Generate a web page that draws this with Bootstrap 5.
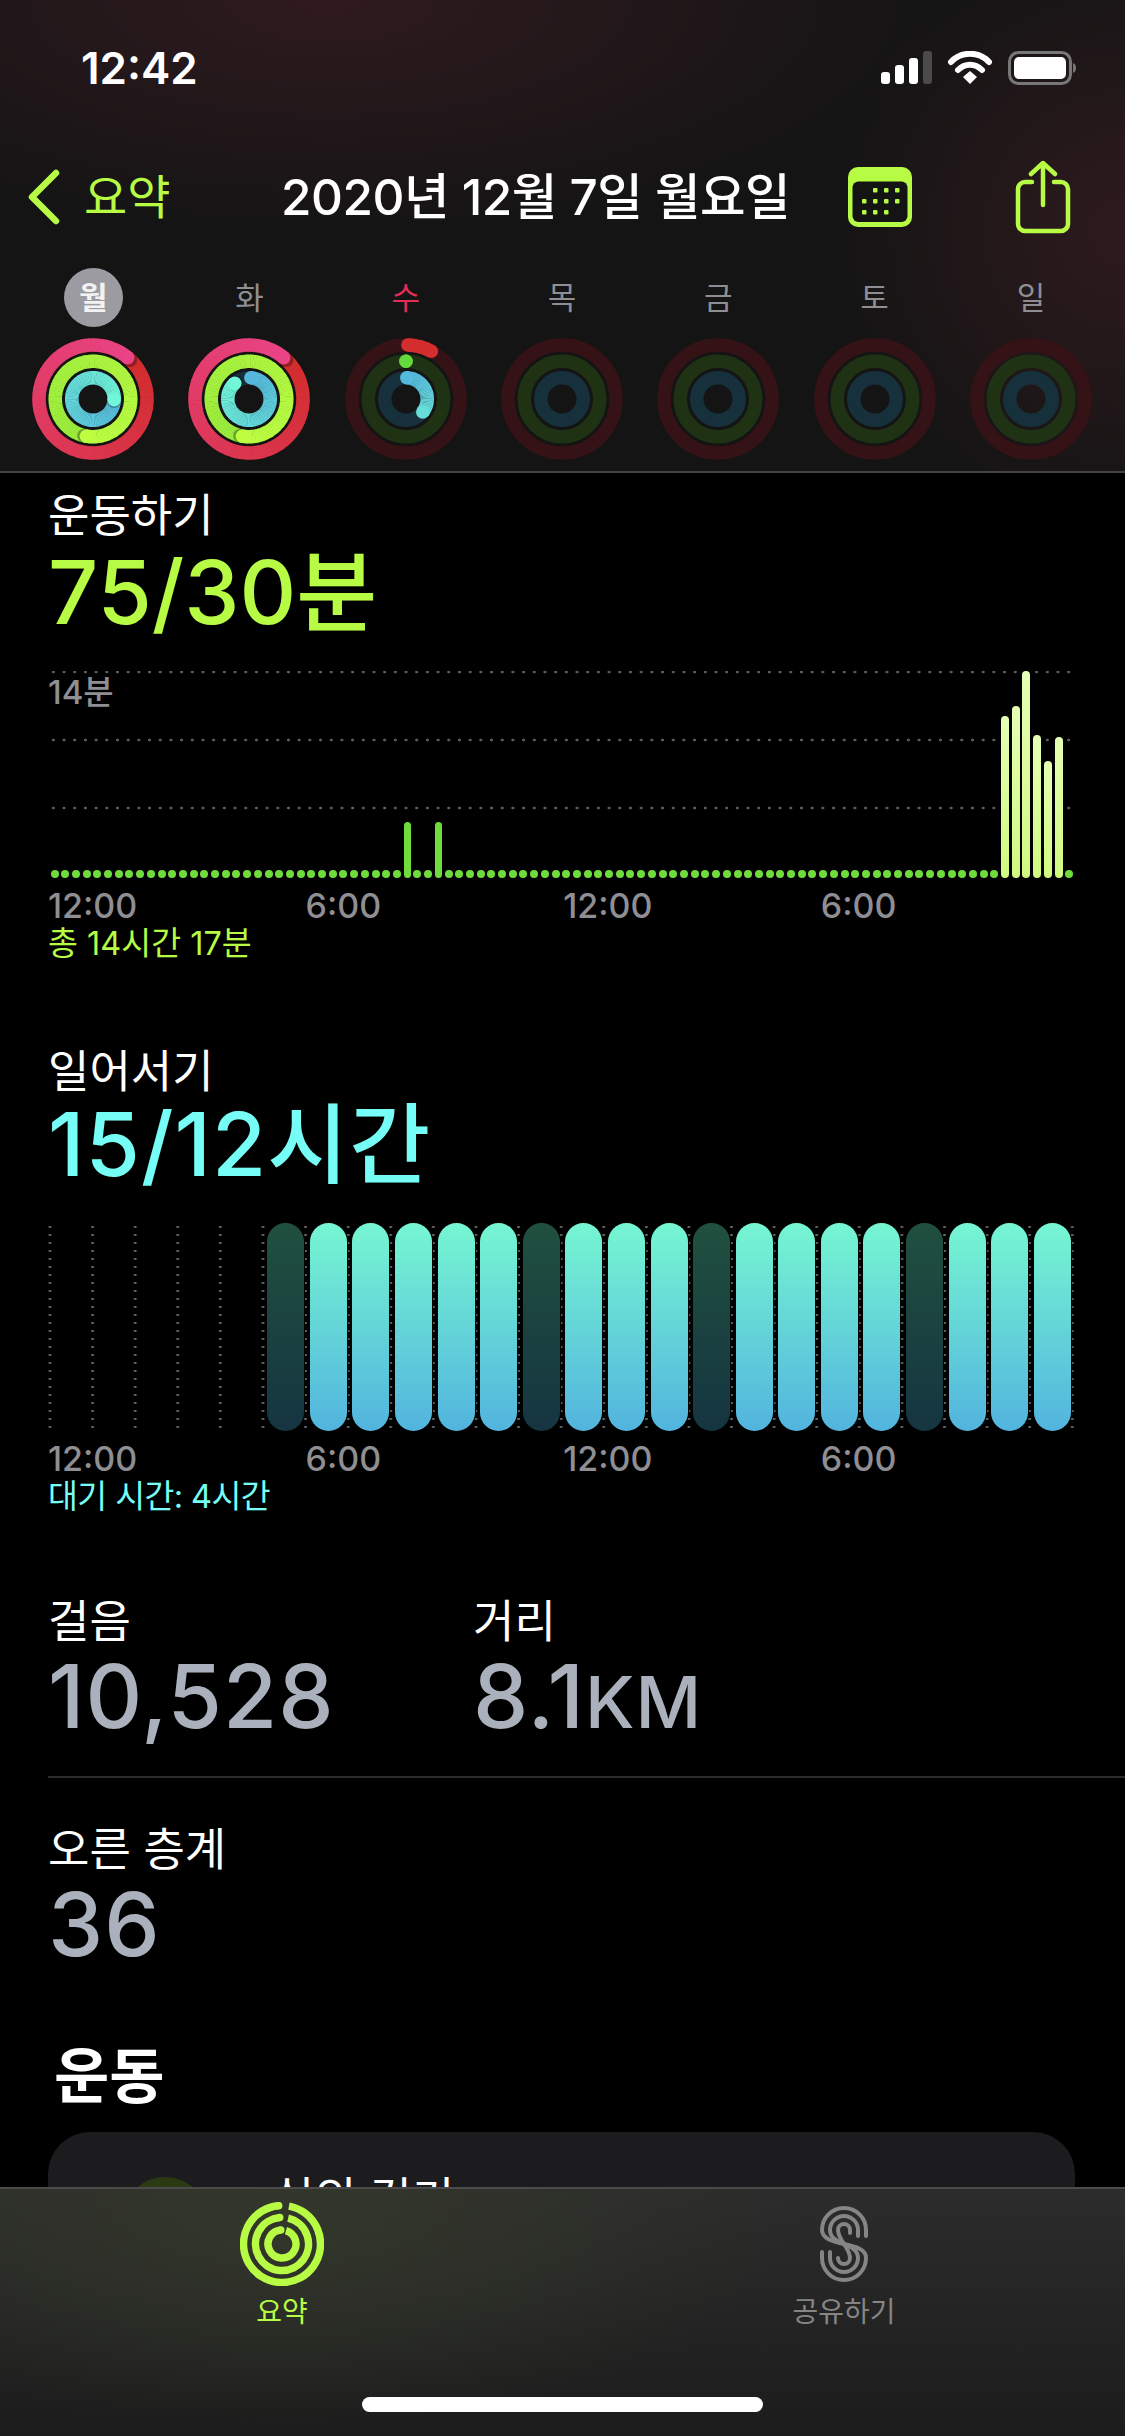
<!DOCTYPE html>
<html lang="ko">
<head>
  <meta charset="UTF-8">
  <meta name="viewport" content="width=device-width, initial-scale=1">
  <title>활동 요약</title>
  <link href="https://cdn.jsdelivr.net/npm/bootstrap@5.3.0/dist/css/bootstrap.min.css" rel="stylesheet">
  <style>
    body { background: #000; color: #fff; font-family: Inter, "Noto Sans CJK KR", sans-serif; }
    .phone { width: 1125px; height: 2436px; }

    /* header */
    .top-area { height: 473px; border-bottom: 2px solid #444446; background: radial-gradient(620px 240px at 330px 0, #2f1a1f, transparent), radial-gradient(300px 300px at 1125px 230px, #2e1a1e, transparent), #141414; }
    .status-row { height: 136px; padding: 0 44px 0 81px; }
    .clock { font-size: 44px; font-weight: 600; }
    .nav-row { height: 122px; padding: 0 54px 0 28px; }
    .back-link { width: 240px; gap: 24px; color: #b7fb45; font-size: 47px; }
    .date-title { margin: 0 auto 0 13px; font-size: 49.5px; font-weight: 500; letter-spacing: -.5px; white-space: nowrap; }
    .nav-icons { gap: 103px; }
    .week-row { padding: 10px 0 0 15px; }
    .week-cell { width: 156.3px; }
    .day-name { height: 59px; font-size: 31px; color: #8e8e93; }
    .day-name.today { color: #e22e58; }
    .day-name span { width: 59px; height: 59px; line-height: 59px; }
    .day-name.picked span { background: #9c9ba2; color: #f2f2f2; font-weight: 600; }
    .ring-box { margin-top: 11px; height: 122px; }

    /* scrolling content */
    .scroll-area { padding-left: 48px; flex: 1 1 0; min-height: 0; }
    .stat-label { height: 60px; line-height: 60px; font-size: 45px; }
    .stat-big { height: 88px; line-height: 88px; font-size: 88px; font-weight: 500; letter-spacing: 1px; white-space: nowrap; }
    .unit-small { font-size: 72px; }
    .lime-text { color: #b7fb45; }
    .aqua-text { color: #76fdf5; }
    .silver-text { color: #aab0bc; }
    .first-label { margin-top: 13px; }
    .first-big { margin-top: 2px; letter-spacing: 0; }
    .move-chart { margin-top: 35px; width: 1027px; height: 207px; padding: 0 1px 0 2.500px; background-image: radial-gradient(circle, #5c5c5c 1.2px, transparent 1.7px), radial-gradient(circle, #5c5c5c 1.2px, transparent 1.7px), radial-gradient(circle, #5c5c5c 1.2px, transparent 1.7px); background-size: 10.69px 4px; background-repeat: repeat-x; background-position: 0 -1px, 0 67px, 0 135px; }
    .chart-note { position: absolute; left: 0; top: 1px; font-size: 33px; font-weight: 500; color: #8e8e93; line-height: 40px; }
    .min-col { width: 8px; }
    .min-col.dot { background: #6fdc3c; }
    .min-col.low { width: 7px; background: #6fdc3c; }
    .min-col.high { background: linear-gradient(#e6ffb5, #d0fa80); box-shadow: 0 0 0 2px #000; }
    .time-row { height: 40px; line-height: 40px; margin-top: 8px; font-size: 34px; font-weight: 500; color: #8e8e93; }
    .time-row span { width: 257.6px; }
    .sum-line { height: 36px; line-height: 36px; font-size: 32.500px; }
    .sum-line.aqua-text { letter-spacing: -.6px; }
    .stand-label { margin-top: 80px; }
    .stand-big { margin-top: -2px; }
    .stand-chart { margin-top: 35px; width: 1027px; height: 208px; padding-left: 3.200px; background-image: radial-gradient(circle, #666 1px, transparent 1.5px); background-size: 42.6px 8px; background-position: -19.3px 0; }
    .hour-col { width: 42.6px; flex: none; }
    .hour-bar { width: 37px; height: 100%; margin-left: 3px; background: linear-gradient(#76f6d2, #52b4de); box-shadow: 0 0 0 1px #000; }
    .hour-bar.idle { background: linear-gradient(#20503f, #153541); }
    .steps-label { margin-top: 77px; }
    .steps-col { width: 425px; }
    .split-line { margin-top: 36px; border-top: 2px solid #2c2c2e; }
    .floors-label { margin-top: 42px; }
    .section-title { margin-top: 74px; padding-left: 6px; height: 68px; line-height: 68px; font-size: 60px; font-weight: 700; }
    .workout-box { margin-top: 22px; width: 1027px; height: 200px; padding: 45px 0 0 74px; gap: 64px; background: #1c1c1f; border-radius: 42px 42px 0 0; }
    .workout-dot { width: 86px; height: 86px; background: #2c3a14; }
    .workout-name { margin-top: -9px; font-size: 46px; line-height: 60px; }

    /* tab bar */
    .tab-area { height: 249px; border-top: 2px solid #4b4b4d; background: radial-gradient(520px 220px at 280px 20px, #33372a, transparent), linear-gradient(#2c2c2c, #1b1c1b); }
    .tab-row { padding: 13px 0 0 182px; gap: 362px; }
    .tab-item { width: 200px; }
    .tab-icon { height: 84px; }
    .tab-text { margin-top: 8px; height: 36px; line-height: 36px; font-size: 28px; }
    .tab-text.off { color: #858585; }
    .home-bar { width: 401px; height: 15px; margin-top: 67px; background: #fff; }
  </style>
</head>
<body>
  <div class="phone d-flex flex-column overflow-hidden">
    <!-- 상단 영역 -->
    <header class="top-area flex-shrink-0">
      <div class="status-row d-flex align-items-center justify-content-between">
        <div class="clock">12:42</div>
        <svg width="200" height="34" viewBox="0 0 200 34">
          <rect x="0" y="21" width="9" height="12" rx="3" fill="#fff"/>
          <rect x="14" y="14" width="9" height="19" rx="3" fill="#fff"/>
          <rect x="28" y="7" width="9" height="26" rx="3" fill="#fff"/>
          <rect x="42" y="0" width="9" height="33" rx="3" fill="#4a4a4a"/>
          <path d="M70 11 C80 0 98 0 108 11" fill="none" stroke="#fff" stroke-width="6" stroke-linecap="round"/>
          <path d="M77 19 C84 12 94 12 101 19" fill="none" stroke="#fff" stroke-width="6" stroke-linecap="round"/>
          <path d="M82 26 L89 20 L96 26 L89 33 Z" fill="#fff"/>
          <rect x="128.500" y="1.500" width="61" height="31" rx="9" fill="none" stroke="#777" stroke-width="3"/>
          <rect x="133" y="6" width="52" height="22" rx="5" fill="#fff"/>
          <path d="M192 12 C196 13 196 21 192 22 Z" fill="#777"/>
        </svg>
      </div>
      <nav class="nav-row d-flex align-items-center">
        <div class="back-link d-flex align-items-center">
          <svg width="32" height="56" viewBox="0 0 32 56"><path d="M28 4 L4 28 L28 52" fill="none" stroke="#b7fb45" stroke-width="6.500" stroke-linecap="round" stroke-linejoin="round"/></svg>
          <span>요약</span>
        </div>
        <div class="date-title">2020년 12월 7일 월요일</div>
        <div class="nav-icons d-flex align-items-center">
          <svg width="64" height="60" viewBox="0 0 64 60">
            <rect width="64" height="60" rx="10" fill="#b7fb45"/>
            <rect x="4.500" y="14.500" width="55" height="40.500" rx="6" fill="#141414"/>
            <g fill="#b7fb45">
              <rect x="25" y="21" width="4.500" height="4.500" rx="1"/><rect x="36" y="21" width="4.500" height="4.500" rx="1"/><rect x="47" y="21" width="4.500" height="4.500" rx="1"/>
              <rect x="14" y="32" width="4.500" height="4.500" rx="1"/><rect x="25" y="32" width="4.500" height="4.500" rx="1"/><rect x="36" y="32" width="4.500" height="4.500" rx="1"/><rect x="47" y="32" width="4.500" height="4.500" rx="1"/>
              <rect x="14" y="43" width="4.500" height="4.500" rx="1"/><rect x="25" y="43" width="4.500" height="4.500" rx="1"/><rect x="36" y="43" width="4.500" height="4.500" rx="1"/>
            </g>
          </svg>
          <svg width="56" height="74" viewBox="0 0 56 74">
            <path d="M17 22 H10 A7 7 0 0 0 3 29 V64 A7 7 0 0 0 10 71 H46 A7 7 0 0 0 53 64 V29 A7 7 0 0 0 46 22 H39" fill="none" stroke="#b7fb45" stroke-width="4.500" stroke-linecap="round"/>
            <path d="M28 45 V3 M16 14 L28 3 L40 14" fill="none" stroke="#b7fb45" stroke-width="4.500" stroke-linecap="round" stroke-linejoin="round"/>
          </svg>
        </div>
      </nav>
      <div id="weekRow" class="week-row d-flex"></div>
    </header>

    <!-- 본문 -->
    <main class="scroll-area overflow-hidden">
      <div class="stat-label first-label">운동하기</div>
      <div class="stat-big first-big lime-text">75/30분</div>
      <div id="moveChart" class="move-chart position-relative d-flex justify-content-between align-items-end">
        <div class="chart-note">14분</div>
      </div>
      <div class="time-row d-flex"><span>12:00</span><span>6:00</span><span>12:00</span><span>6:00</span></div>
      <div class="sum-line lime-text">총 14시간 17분</div>

      <div class="stat-label stand-label">일어서기</div>
      <div class="stat-big stand-big aqua-text">15/12시간</div>
      <div id="standChart" class="stand-chart d-flex"></div>
      <div class="time-row d-flex"><span>12:00</span><span>6:00</span><span>12:00</span><span>6:00</span></div>
      <div class="sum-line aqua-text">대기 시간: 4시간</div>

      <div class="d-flex steps-label">
        <div class="steps-col">
          <div class="stat-label">걸음</div>
          <div class="stat-big silver-text">10,528</div>
        </div>
        <div>
          <div class="stat-label">거리</div>
          <div class="stat-big silver-text">8.1<span class="unit-small">KM</span></div>
        </div>
      </div>
      <div class="split-line"></div>
      <div class="stat-label floors-label">오른 층계</div>
      <div class="stat-big silver-text">36</div>

      <div class="section-title">운동</div>
      <div class="workout-box d-flex">
        <div class="workout-dot rounded-circle flex-shrink-0"></div>
        <div class="workout-name">실외 걷기</div>
      </div>
    </main>

    <!-- 하단 탭 -->
    <footer class="tab-area flex-shrink-0">
      <div class="tab-row d-flex">
        <div class="tab-item d-flex flex-column align-items-center">
          <svg id="tabRings" class="tab-icon" width="84" height="84" viewBox="0 0 84 84"></svg>
          <div class="tab-text lime-text">요약</div>
        </div>
        <div class="tab-item d-flex flex-column align-items-center">
          <svg class="tab-icon" width="50" height="84" viewBox="-1 -4 50 84">
            <g fill="none" stroke="#858585" stroke-width="4" stroke-linecap="round">
              <path d="M46 30 V24 A22 22 0 0 0 2 24 C2 42 46 34 46 52 A22 22 0 0 1 2 52 V46"/>
              <path d="M38 30 V24 A14 14 0 0 0 10 24 C10 40 38 36 38 52 A14 14 0 0 1 10 52 V46"/>
              <path d="M30 27 V24 A6 6 0 0 0 18 24 C18 34 30 42 30 52 A6 6 0 0 1 18 52"/>
            </g>
          </svg>
          <div class="tab-text off">공유하기</div>
        </div>
      </div>
      <div class="home-bar rounded-pill mx-auto"></div>
    </footer>
  </div>

  <script>
    function polar(r, deg, c) {
      const a = (deg - 90) * Math.PI / 180;
      return [c + r * Math.cos(a), c + r * Math.sin(a)];
    }

    function arcPath(r, a, b, c) {
      const [x1, y1] = polar(r, a, c);
      const [x2, y2] = polar(r, b, c);
      return `M${x1} ${y1} A${r} ${r} 0 ${b - a > 180 ? 1 : 0} 1 ${x2} ${y2}`;
    }

    function mixColor(c1, c2, t) {
      const parse = h => [1, 3, 5].map(i => parseInt(h.substr(i, 2), 16));
      const p = parse(c1), q = parse(c2);
      return `rgb(${p.map((v, i) => Math.round(v + (q[i] - v) * t)).join(',')})`;
    }

    // 활동 링 하나를 짧은 호로 나눠서 그라데이션처럼 그린다
    function drawRing(r, ring) {
      const w = 13.5, c = 61;
      let out = `<circle cx="${c}" cy="${c}" r="${r}" fill="none" stroke="${ring.base}" stroke-width="${w}"/>`;
      if (!ring.to && ring.to !== 0) return out;
      const [sx, sy] = polar(r, ring.from, c);
      out += `<circle cx="${sx}" cy="${sy}" r="${w / 2}" fill="${ring.c1}"/>`;
      const steps = Math.max(1, Math.ceil((ring.to - ring.from) / 4));
      const seg = (ring.to - ring.from) / steps;
      const parts = [];
      for (let i = 0; i < steps; i++) {
        const a = ring.from + seg * i;
        const col = mixColor(ring.c1, ring.c2, i / steps);
        parts.push(`<path d="${arcPath(r, a, a + seg + .6, c)}" fill="none" stroke="${col}" stroke-width="${w}"/>`);
      }
      out += parts.slice(0, -6).join('');
      if (ring.to - ring.from >= 300) {
        const [px, py] = polar(r, ring.to + 4, c);
        out += `<circle cx="${px}" cy="${py}" r="${w / 2}" fill="#000" opacity=".3"/>`;
      }
      out += parts.slice(-6).join('');
      const [ex, ey] = polar(r, ring.to, c);
      out += `<circle cx="${ex}" cy="${ey}" r="${w / 2}" fill="${ring.c2}"/>`;
      return out;
    }

    const RED = '#351216', GREEN = '#1f3314', BLUE = '#16303c';
    const dayRings = [
      { name: '월', cls: 'picked', rings: [
        { base: RED, from: 40, to: 400, c1: '#d22c2c', c2: '#ea4487' },
        { base: GREEN, from: 190, to: 550, c1: '#98ea3c', c2: '#bdfd42' },
        { base: BLUE, from: 92, to: 452, c1: '#55b8dc', c2: '#72f6d8' } ] },
      { name: '화', cls: '', rings: [
        { base: RED, from: 40, to: 400, c1: '#d22c2c', c2: '#ea4487' },
        { base: GREEN, from: 190, to: 550, c1: '#98ea3c', c2: '#bdfd42' },
        { base: BLUE, from: 5, to: 318, c1: '#55b8dc', c2: '#72f6d8' } ] },
      { name: '수', cls: 'today', rings: [
        { base: RED, from: 2, to: 28, c1: '#d42d2d', c2: '#d42d2d' },
        { base: GREEN, from: 0, to: 0, c1: '#63d93c', c2: '#63d93c' },
        { base: BLUE, from: 2, to: 128, c1: '#55b8dc', c2: '#68dcd8' } ] },
      { name: '목', cls: '', rings: [{ base: RED }, { base: GREEN }, { base: BLUE }] },
      { name: '금', cls: '', rings: [{ base: RED }, { base: GREEN }, { base: BLUE }] },
      { name: '토', cls: '', rings: [{ base: RED }, { base: GREEN }, { base: BLUE }] },
      { name: '일', cls: '', rings: [{ base: RED }, { base: GREEN }, { base: BLUE }] }
    ];

    const radii = [54, 37.75, 21.25];
    document.getElementById('weekRow').innerHTML = dayRings.map(day => `
      <div class="week-cell d-flex flex-column align-items-center">
        <div class="day-name ${day.cls}"><span class="d-block rounded-circle text-center">${day.name}</span></div>
        <svg class="ring-box" width="122" height="122" viewBox="0 0 122 122">${day.rings.map((ring, i) => drawRing(radii[i], ring)).join('')}</svg>
      </div>`).join('');

    // 분 단위 운동 차트 (96칸)
    const highBars = { 89: 162, 90: 172, 91: 207, 92: 143, 93: 117, 94: 141 };
    const lowBars = { 33: 56, 36: 56 };
    const moveChart = document.getElementById('moveChart');
    for (let i = 0; i < 96; i++) {
      const col = document.createElement('div');
      let h = 8, kind = 'dot';
      if (highBars[i]) { h = highBars[i]; kind = 'high'; }
      if (lowBars[i]) { h = lowBars[i]; kind = 'low'; }
      col.className = `min-col ${kind} rounded-pill`;
      col.style.height = h + 'px';
      moveChart.appendChild(col);
    }

    // 시간별 일어서기 차트 (24칸)
    const idleHours = [5, 11, 15, 20];
    const standChart = document.getElementById('standChart');
    for (let i = 0; i < 24; i++) {
      const col = document.createElement('div');
      col.className = 'hour-col';
      if (i >= 5) {
        col.innerHTML = `<div class="hour-bar rounded-pill ${idleHours.includes(i) ? 'idle' : ''}"></div>`;
      }
      standChart.appendChild(col);
    }

    // 탭 아이콘
    document.getElementById('tabRings').innerHTML = [38.5, 26.5, 14].map(r => {
      const [ex, ey] = polar(r, 355, 42);
      return `<path d="${arcPath(r, 20 - r / 4, 355, 42)}" fill="none" stroke="#b7fb45" stroke-width="7.500"/><circle cx="${ex}" cy="${ey}" r="3.750" fill="#b7fb45"/>`;
    }).join('');
  </script>

  <script src="https://cdn.jsdelivr.net/npm/bootstrap@5.3.0/dist/js/bootstrap.bundle.min.js"></script>
</body>
</html>
